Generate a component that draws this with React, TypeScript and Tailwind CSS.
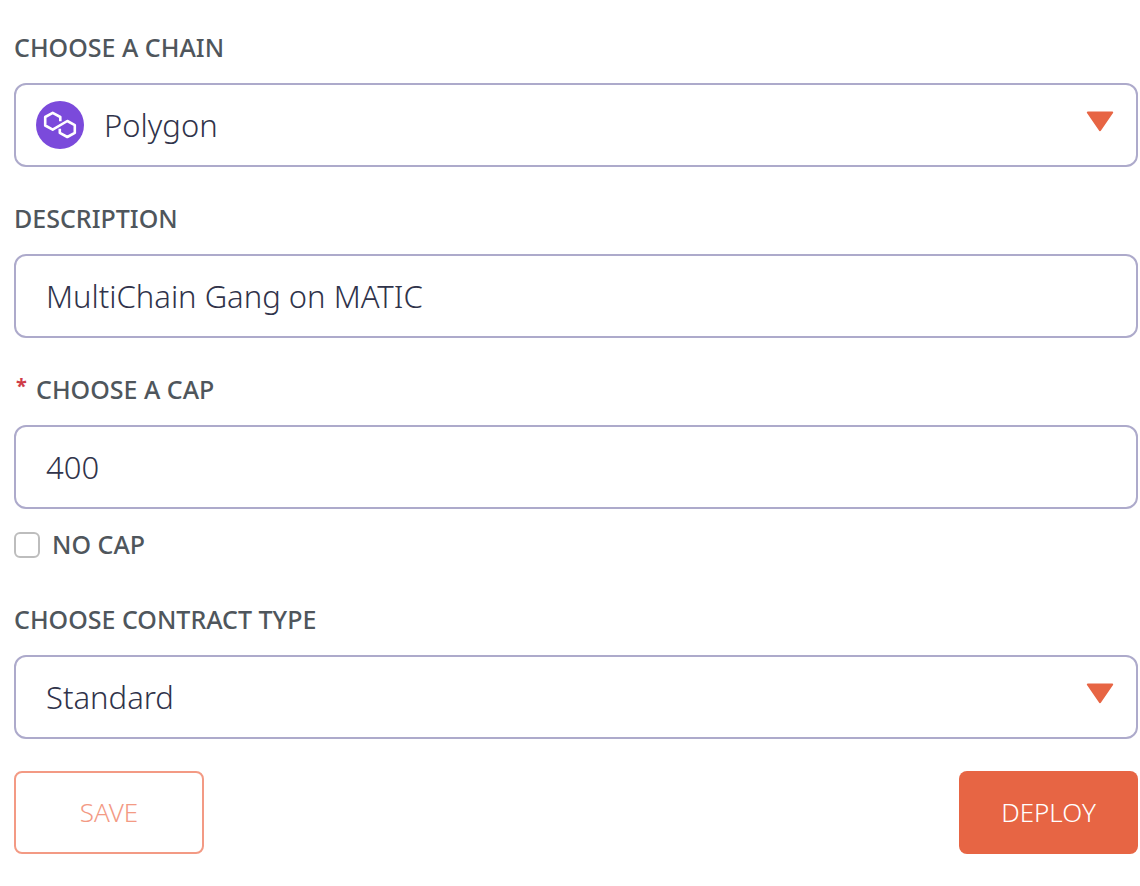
import type { ReactNode } from "react"

const fieldClass =
  "block w-full h-[84px] appearance-none rounded-xl border-2 border-[#adaacb] bg-white pr-16 text-[31px] font-light text-[#30334a] outline-none focus:border-[#8c88b8]"

const labelClass =
  "block text-[25px] leading-[39px] font-medium uppercase text-[#4f565c]"

function PolygonIcon() {
  return (
    <svg viewBox="0 0 48 48" className="size-12" aria-hidden="true">
      <circle cx="24" cy="24" r="24" fill="#7b4adb" />
      <path
        d="M24.3 20.2v-4.2l-7.6-4.2-7.5 4.2v8.5l7.5 4.2L31.3 20l7.5 4.2v7.6L31.3 36l-7.5-4.2v-4.1"
        fill="none"
        stroke="#fff"
        strokeWidth="2.6"
        strokeLinejoin="round"
      />
    </svg>
  )
}

function Arrow() {
  return (
    <svg
      viewBox="0 0 28 21"
      className="pointer-events-none absolute right-6 top-7 h-[21px] w-7"
      aria-hidden="true"
    >
      <path
        d="M1.8 1.5h24.4L14 19.3z"
        fill="#e76544"
        stroke="#e76544"
        strokeWidth="2"
        strokeLinejoin="round"
      />
    </svg>
  )
}

type FieldProps = {
  id: string
  label: string
  required?: boolean
  children: ReactNode
}

function Field({ id, label, required, children }: FieldProps) {
  return (
    <div>
      <label htmlFor={id} className={`${labelClass} mb-4`}>
        {required && (
          <span className="inline-block w-[22px] pl-0.5 align-text-top text-xl font-bold text-[#cf3c48]">
            *
          </span>
        )}
        {label}
      </label>
      <div className="relative">{children}</div>
    </div>
  )
}

export default function App() {
  return (
    <form
      className="flex flex-col gap-8 bg-white pt-7 pr-0.5 pb-8 pl-3.5 font-['Noto_Sans',sans-serif]"
      onSubmit={(e) => e.preventDefault()}
    >
      <Field id="chain" label="Choose a chain">
        <select id="chain" className={`${fieldClass} pl-[88px]`}>
          <option>Polygon</option>
        </select>
        <span className="pointer-events-none absolute left-[22px] top-[18px]">
          <PolygonIcon />
        </span>
        <Arrow />
      </Field>

      <Field id="description" label="Description">
        <input
          id="description"
          type="text"
          defaultValue="MultiChain Gang on MATIC"
          className={`${fieldClass} pl-[30px]`}
        />
      </Field>

      <div className="mb-1">
        <Field id="cap" label="Choose a cap" required>
          <input
            id="cap"
            type="text"
            inputMode="numeric"
            required
            defaultValue="400"
            className={`${fieldClass} pl-[30px]`}
          />
        </Field>
        <div className="mt-4 flex items-center gap-3">
          <input
            id="no-cap"
            type="checkbox"
            className="size-[26px] appearance-none rounded-md border-2 border-[#bdbdbd] bg-white checked:bg-[#e76544]"
          />
          <label htmlFor="no-cap" className={labelClass}>
            No cap
          </label>
        </div>
      </div>

      <Field id="contract-type" label="Choose contract type">
        <select id="contract-type" className={`${fieldClass} pl-[30px]`}>
          <option>Standard</option>
        </select>
        <Arrow />
      </Field>

      <div className="flex justify-between">
        <button
          type="button"
          className="h-[83px] w-[190px] rounded-lg border-2 border-[#f39a84] text-[26px] font-light text-[#f39a84]"
        >
          SAVE
        </button>
        <button
          type="submit"
          className="h-[83px] w-[179px] rounded-lg bg-[#e76544] text-[26px] font-light text-white"
        >
          DEPLOY
        </button>
      </div>
    </form>
  )
}
